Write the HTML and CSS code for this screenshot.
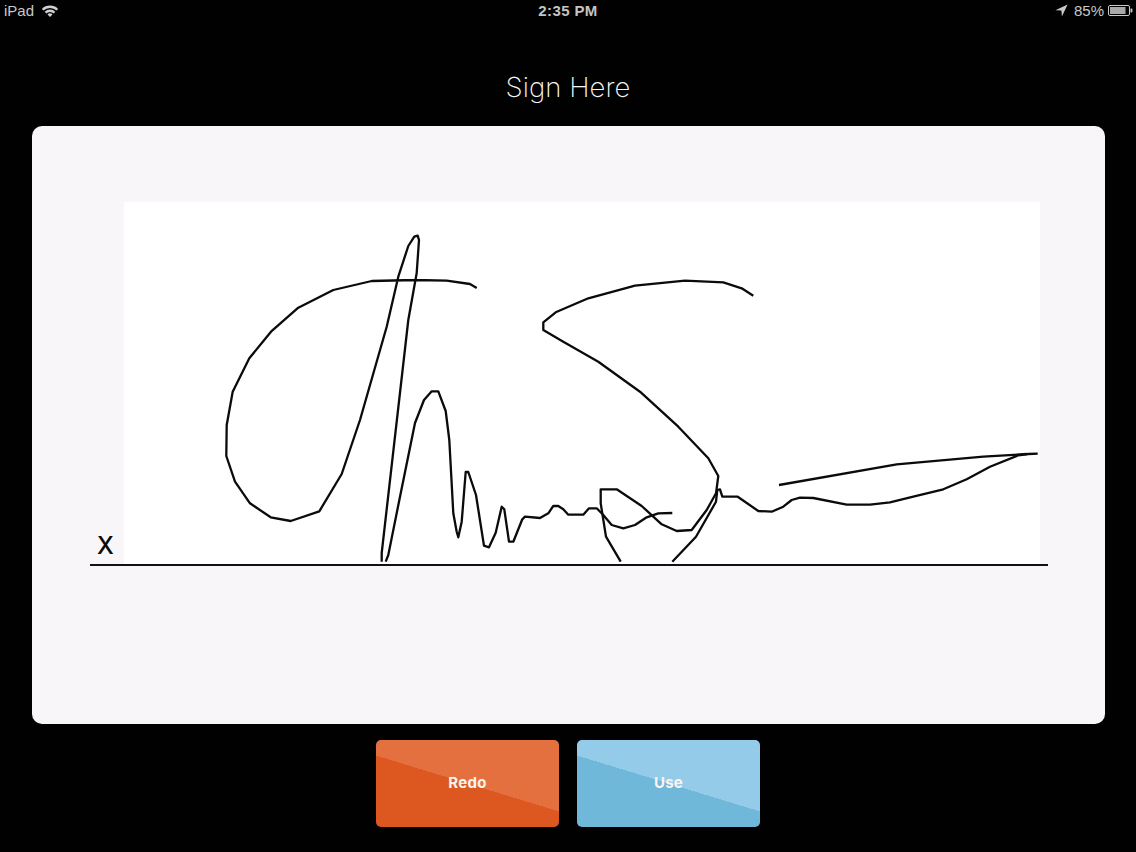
FILE: index.html
```html
<!DOCTYPE html>
<html lang="en">
<head>
<meta charset="utf-8">
<title>Sign Here</title>
<link rel="stylesheet" href="styles.css">
</head>
<body>
<div class="screen">
  <header class="status-bar">
    <div class="status-left">
      <span>iPad</span>
      <svg class="wifi" viewBox="0 0 18 13" aria-hidden="true">
        <path d="M0.9 4.9 A11.6 11.6 0 0 1 17.1 4.9 L15.5 6.6 A9.3 9.3 0 0 0 2.5 6.6 Z"/>
        <path d="M3.7 7.7 A7.6 7.6 0 0 1 14.3 7.7 L12.7 9.4 A5.3 5.3 0 0 0 5.3 9.4 Z"/>
        <path d="M6.5 10.5 A3.6 3.6 0 0 1 11.5 10.5 L9 13 Z"/>
      </svg>
    </div>
    <div class="status-time">2:35 PM</div>
    <div class="status-right">
      <svg class="locate" viewBox="0 0 13 13" aria-hidden="true"><path d="M12.6 0.4 L0.4 6.2 L6.4 6.6 L6.9 12.6 Z"/></svg>
      <span>85%</span>
      <svg class="battery" viewBox="0 0 25 11" aria-hidden="true">
        <rect class="battery-shell" x="0.5" y="0.5" width="21" height="10" rx="1.5"/>
        <rect class="battery-fill" x="2" y="2" width="15.5" height="7"/>
        <path class="battery-tip" d="M22.5 3.5 H23.4 A1 1 0 0 1 24.4 4.5 V6.5 A1 1 0 0 1 23.4 7.5 H22.5 Z"/>
      </svg>
    </div>
  </header>

  <h1 class="title">Sign Here</h1>

  <main class="card">
    <div class="sign-row">
      <div class="x-mark">X</div>
      <div class="pad">
        <svg class="signature" viewBox="124 202 916 363" aria-label="Signature">
          <polyline points="476.7,288 470,284 446.7,280.7 415,280 371.7,281 333.3,290 298.3,307.7 271,331.7 249.3,358.3 232.7,391.7 226.7,425 226.3,456 235,481.7 250,503.3 270.7,517.3 290.7,521 319.3,511.3 341.7,474 360,420 386.7,326.7 398.3,276.7 408.3,246 414.3,236.7 417.7,235.7 419,240 416.7,273 408.3,320 381.7,553 381.7,561.7"/>
          <polyline points="385.7,561.7 388.3,555 400,496.7 415,423 424,400 431.7,391.3 438.3,391.3 445.7,411 449.3,440 453.3,513.3 456.7,531.7 458.3,537.3 461.7,521.7 465.7,472 468.3,472 476,495 484,545.7 489,547.3 495.7,532.7 501.7,506.7 504.3,509.3 509,541.7 513.3,541.7 522.3,519.3 525,516.7 540,518 548.3,513.3 553.3,506 558.3,506 563.3,509.3 568.3,514.7 583.3,514.7 589,508.3 596.7,508.3 603.3,515 611.7,525 623.3,528.3 635,525 646.7,517.3 658.3,513.3 672.3,513"/>
          <polyline points="620.7,561.7 606,536.7 600.7,503.3 600.7,489.3 616.7,489.3 641.7,506 661.7,524.3 676.7,531 691.7,530 706.7,510 716,493.3 718.3,476 708.3,458.3 678.3,426.7 640,391.7 598.3,361.7 563.3,341.7 543.3,330 543.3,322.3 555.7,312.3 588.3,298.3 635,285.7 685,280.7 723.3,282.3 741.7,288.3 753.3,295.7"/>
          <polyline points="672.3,561.7 696,536.7 716,501.7 717.3,490 720,489.3 722.3,496.7 737.7,496.7 758.3,511 771.7,511.7 783.3,506.7 791.7,500 800,497.7 813.3,498 846.7,504.7 870,504.7 890,502.3 913.3,496.7 943.3,489.3 966.7,479.3 990,466.7 1018.3,455.3 1028.3,454 1037.7,453.7"/>
          <polyline points="779,485 896.7,464.3 983.3,456.7 1026.7,454"/>
        </svg>
      </div>
    </div>
  </main>

  <div class="actions">
    <button class="action action-redo" type="button">Redo</button>
    <button class="action action-use" type="button">Use</button>
  </div>
</div>
</body>
</html>
```
FILE: styles.css
```css
html, body {
  margin: 0;
  padding: 0;
  background: #010102;
}

.screen {
  width: 1136px;
  height: 852px;
  overflow: hidden;
  display: flex;
  flex-direction: column;
  align-items: center;
  font-family: "Liberation Sans", Arial, sans-serif;
}

.status-bar {
  align-self: stretch;
  height: 21px;
  padding: 0 3px 0 4px;
  display: grid;
  grid-template-columns: 1fr auto 1fr;
  align-items: center;
  color: #c9c9c9;
  font-size: 15px;
}

.status-left {
  display: flex;
  align-items: center;
  gap: 7px;
}

.status-time {
  font-weight: 700;
  color: #c4c4c4;
  letter-spacing: 0.4px;
  margin-right: 1px;
}

.status-right {
  display: flex;
  align-items: center;
  justify-content: flex-end;
  gap: 4px;
}

.wifi {
  width: 18px;
  height: 13px;
  fill: #d0d0d0;
}

.locate {
  width: 13px;
  height: 13px;
  margin-right: 2px;
  fill: #c9c9c9;
}

.battery {
  width: 25px;
  height: 11px;
}

.battery-shell {
  fill: none;
  stroke: #c9c9c9;
}

.battery-fill {
  fill: #a8a8a8;
}

.battery-tip {
  fill: #c9c9c9;
}

.title {
  margin: 46px 0 0;
  height: 40px;
  line-height: 40px;
  font-family: Inter, "Noto Sans", sans-serif;
  font-size: 27.5px;
  font-weight: 200;
  letter-spacing: 0.05px;
  color: #f6f6f6;
}

.card {
  margin-top: 19px;
  width: 1073px;
  height: 598px;
  box-sizing: border-box;
  padding: 76px 0 0 58px;
  margin-left: 1px;
  border-radius: 10px;
  background: #f8f6f9;
}

.sign-row {
  width: 958px;
  display: flex;
  border-bottom: 2px solid #111;
}

.x-mark {
  width: 34px;
  align-self: flex-end;
  box-sizing: border-box;
  padding: 0 0 7px 7px;
  font-family: Inter, sans-serif;
  font-size: 24px;
  font-weight: 500;
  line-height: 22px;
  color: #0a0a0a;
}

.pad {
  width: 916px;
  height: 362px;
  background: #fff;
}

.signature {
  display: block;
  width: 916px;
  height: 363px;
  fill: none;
  stroke: #0b0b0b;
  stroke-width: 2.3;
  stroke-linejoin: round;
}

.actions {
  margin-top: 16px;
  display: flex;
  gap: 18px;
}

.action {
  width: 183px;
  height: 87px;
  padding: 0 0 3px;
  border: 0;
  border-radius: 5px;
  font-family: Inter, "Noto Sans", sans-serif;
  font-size: 15px;
  font-weight: 700;
  letter-spacing: 0.3px;
  color: #fbf3ee;
}

.action-redo {
  background: linear-gradient(197deg, #e5703f 50%, #dc5820 50%);
}

.action-use {
  background: linear-gradient(197deg, #93cbe8 50%, #70b8da 50%);
}
```
